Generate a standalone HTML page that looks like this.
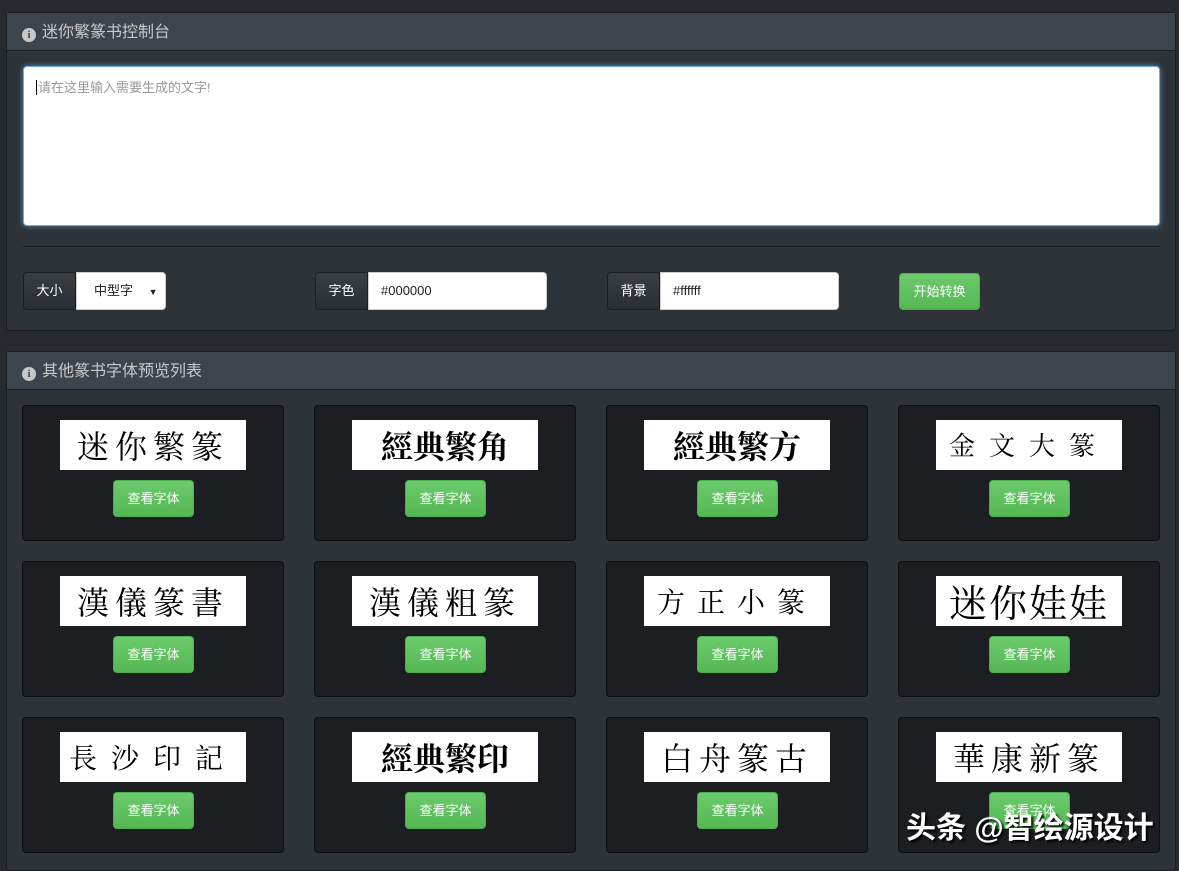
<!DOCTYPE html>
<html><head><meta charset="utf-8"><style>
*{box-sizing:border-box;margin:0;padding:0}
body{width:1179px;height:863px;background:#272b30;font-family:"Liberation Sans","Noto Sans CJK SC",sans-serif;position:relative;overflow:hidden;color:#c8c8c8}
.panel{position:absolute;left:6px;width:1170px;background:#2e3338;border:1px solid #1c1e22;border-radius:4px}
.ph{height:38px;background:#3e444c;border-bottom:1px solid #1c1e22;font-size:16px;line-height:40px;padding-left:15px;color:#c8c8c8}
.ic{display:inline-block;width:14px;height:14px;border-radius:50%;background:#c8c8c8;color:#3e444c;font:bold 11px/14px "Liberation Serif",serif;text-align:center;margin-right:6px;vertical-align:-1px}
.ta{position:absolute;left:16px;top:53px;width:1137px;height:160px;background:#fff;border:1px solid #66afe9;border-radius:4px;box-shadow:0 0 6px rgba(102,175,233,.7);font-size:13px;color:#999;padding:10px 12px}
.hr{position:absolute;left:16px;top:233px;width:1137px;border-top:1px solid #1c1e22}
.grp{position:absolute;top:259px;height:38px;display:flex;font-size:13px}
.lab{background:linear-gradient(#3a3f44,#2a2e32);color:#fff;width:53px;line-height:36px;text-align:center;border:1px solid #1c1e22;border-radius:4px 0 0 4px}
.inp{background:#fff;color:#222;line-height:36px;padding-left:12px;border-radius:0 4px 4px 0;border:1px solid #ccc}
.btn{position:absolute;background:linear-gradient(#6ccb6c,#54b754);border:1px solid #4cae4c;border-radius:4px;color:#fff;font-size:13px;text-align:center}
.card{position:absolute;width:262px;height:136px;background:#1c1e22;border:1px solid #0c0d0f;border-radius:4px}
.img{position:absolute;left:37px;top:14px;width:186px;height:50px;background:#fff;color:#000;font:32px/50px "Noto Serif CJK SC","Noto Sans CJK SC",serif;text-align:center;letter-spacing:6px;white-space:nowrap;overflow:hidden}
.card .btn{left:90px;top:74px;width:81px;height:37px;line-height:35px}
.wm{position:absolute;left:906px;top:803px;font-size:30px;font-weight:bold;color:#fff;text-shadow:2px 2px 2px #000;font-family:"Liberation Sans","Noto Sans CJK SC",sans-serif}
</style></head><body>
<div class="panel" style="top:12px;height:319px">
<div class="ph"><span class="ic">i</span>迷你繁篆书控制台</div>
<div class="ta"><span style="border-left:1px solid #000;padding-left:1px">请在这里输入需要生成的文字!</span></div>
<div class="hr"></div>
<div class="grp" style="left:16px"><div class="lab">大小</div><div class="inp" style="width:90px;padding-left:17px">中型字 <span style="font-size:9px;margin-left:12px">▼</span></div></div>
<div class="grp" style="left:308px"><div class="lab">字色</div><div class="inp" style="width:179px">#000000</div></div>
<div class="grp" style="left:600px"><div class="lab">背景</div><div class="inp" style="width:179px">#ffffff</div></div>
<div class="btn" style="left:892px;top:260px;width:81px;height:37px;line-height:35px">开始转换</div>
</div>
<div class="panel" style="top:351px;height:520px">
<div class="ph"><span class="ic">i</span>其他篆书字体预览列表</div>
</div>
<div class="card" style="left:22px;top:405px"><div class="img">迷你繁篆</div><div class="btn">查看字体</div></div>
<div class="card" style="left:314px;top:405px"><div class="img" style="letter-spacing:0;font-weight:bold">經典繁角</div><div class="btn">查看字体</div></div>
<div class="card" style="left:606px;top:405px"><div class="img" style="letter-spacing:0;font-weight:bold">經典繁方</div><div class="btn">查看字体</div></div>
<div class="card" style="left:898px;top:405px"><div class="img" style="font-size:26px;letter-spacing:14px">金文大篆</div><div class="btn">查看字体</div></div>
<div class="card" style="left:22px;top:561px"><div class="img">漢儀篆書</div><div class="btn">查看字体</div></div>
<div class="card" style="left:314px;top:561px"><div class="img">漢儀粗篆</div><div class="btn">查看字体</div></div>
<div class="card" style="left:606px;top:561px"><div class="img" style="font-size:28px;letter-spacing:12px">方正小篆</div><div class="btn">查看字体</div></div>
<div class="card" style="left:898px;top:561px"><div class="img" style="letter-spacing:2px;font-size:38px">迷你娃娃</div><div class="btn">查看字体</div></div>
<div class="card" style="left:22px;top:717px"><div class="img" style="letter-spacing:14px;font-size:28px">長沙印記</div><div class="btn">查看字体</div></div>
<div class="card" style="left:314px;top:717px"><div class="img" style="letter-spacing:0;font-weight:bold">經典繁印</div><div class="btn">查看字体</div></div>
<div class="card" style="left:606px;top:717px"><div class="img">白舟篆古</div><div class="btn">查看字体</div></div>
<div class="card" style="left:898px;top:717px"><div class="img">華康新篆</div><div class="btn">查看字体</div></div>
<div class="wm">头条 @智绘源设计</div>
</body></html>
